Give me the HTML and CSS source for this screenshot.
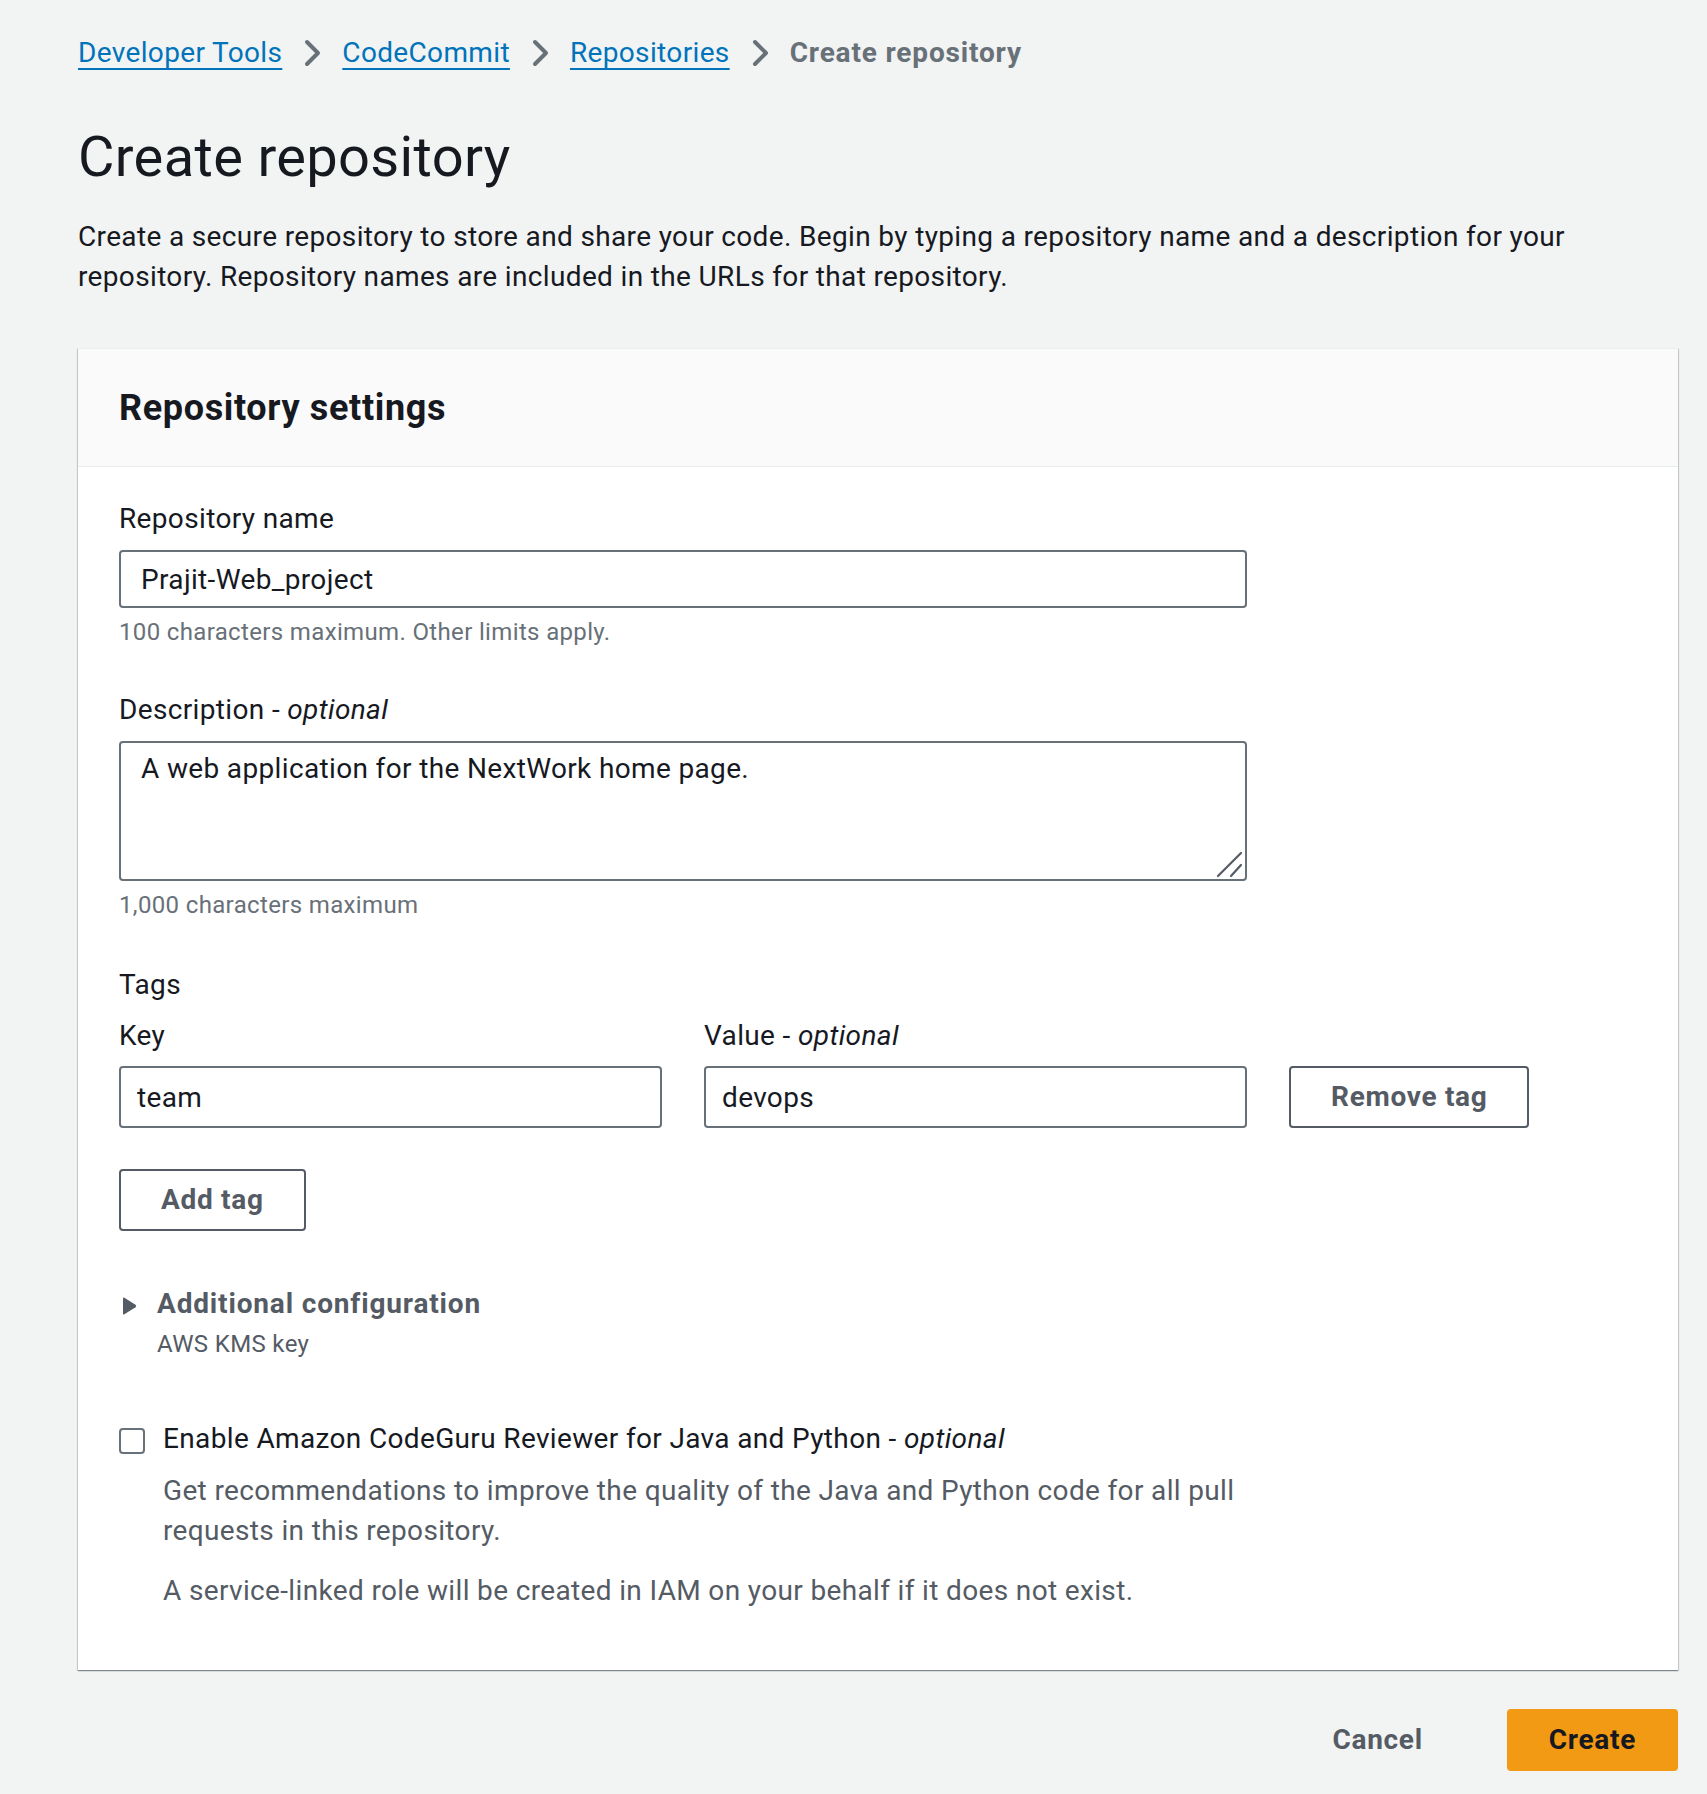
FILE: index.html
```html
<!DOCTYPE html>
<html lang="en">
<head>
<meta charset="utf-8">
<title>Create repository</title>
<link rel="stylesheet" href="styles.css">
</head>
<body>
<div class="page">
  <nav class="breadcrumbs">
    <a class="crumb-link" href="#">Developer Tools</a>
    <svg class="chev" viewBox="0 0 16 16" width="32" height="32"><path d="M5.5 2.5l5.5 5.5-5.5 5.5" /></svg>
    <a class="crumb-link" href="#">CodeCommit</a>
    <svg class="chev" viewBox="0 0 16 16" width="32" height="32"><path d="M5.5 2.5l5.5 5.5-5.5 5.5" /></svg>
    <a class="crumb-link" href="#">Repositories</a>
    <svg class="chev" viewBox="0 0 16 16" width="32" height="32"><path d="M5.5 2.5l5.5 5.5-5.5 5.5" /></svg>
    <span class="crumb-current">Create repository</span>
  </nav>

  <h1 class="title">Create repository</h1>
  <p class="intro">Create a secure repository to store and share your code. Begin by typing a repository name and a description for your repository. Repository names are included in the URLs for that repository.</p>

  <section class="card">
    <div class="card-header">
      <h2 class="card-title">Repository settings</h2>
    </div>
    <div class="card-body">
      <div class="field">
        <label class="label">Repository name</label>
        <input class="input" type="text" value="Prajit-Web_project">
        <div class="hint">100 characters maximum. Other limits apply.</div>
      </div>

      <div class="field field-gap">
        <label class="label">Description - <i>optional</i></label>
        <div class="ta-wrap">
          <textarea class="textarea">A web application for the NextWork home page.</textarea>
          <svg class="grip" viewBox="0 0 28 28" width="28" height="28"><path d="M3 26L26 3M16 26L26 15" /></svg>
        </div>
        <div class="hint">1,000 characters maximum</div>
      </div>

      <div class="field tags-field">
        <div class="label">Tags</div>
        <div class="tag-row">
          <div class="tag-col">
            <label class="label tag-label">Key</label>
            <input class="input tag-input" type="text" value="team">
          </div>
          <div class="tag-col">
            <label class="label tag-label">Value - <i>optional</i></label>
            <input class="input tag-input" type="text" value="devops">
          </div>
          <div class="tag-action">
            <button class="btn" type="button">Remove tag</button>
          </div>
        </div>
        <button class="btn add-btn" type="button">Add tag</button>
      </div>

      <div class="expander">
        <div class="expander-head">
          <svg class="caret" viewBox="0 0 16 20" width="16" height="20"><path d="M2 2.5 Q2 1 3.4 1.8 L14.5 8.8 Q16 10 14.5 11.2 L3.4 18.2 Q2 19 2 17.5 Z" /></svg>
          <span class="expander-title">Additional configuration</span>
        </div>
        <div class="expander-desc">AWS KMS key</div>
      </div>

      <div class="check-row">
        <span class="checkbox"></span>
        <span class="check-label">Enable Amazon CodeGuru Reviewer for Java and Python - <i>optional</i></span>
      </div>
      <div class="check-desc">
        <p class="check-p">Get recommendations to improve the quality of the Java and Python code for all pull requests in this repository.</p>
        <p class="check-p check-p2">A service-linked role will be created in IAM on your behalf if it does not exist.</p>
      </div>
    </div>
  </section>

  <div class="actions">
    <button class="btn btn-link" type="button">Cancel</button>
    <button class="btn btn-primary" type="button">Create</button>
  </div>
</div>
</body>
</html>
```

FILE: styles.css
```css
html, body {
  margin: 0;
  padding: 0;
}
body {
  background: #f2f3f3;
  font-family: Roboto, "Liberation Sans", sans-serif;
  color: #16191f;
  font-size: 28px;
  line-height: 40px;
  letter-spacing: 0.0125em;
  min-height: 1794px;
}
.page {
  width: 1600px;
  margin-left: 78px;
  padding-top: 33px;
}
.breadcrumbs {
  display: flex;
  align-items: center;
  height: 40px;
}
.crumb-link {
  color: #0073bb;
  text-decoration: underline;
  text-decoration-thickness: 2px;
  text-underline-offset: 6px;
}
.chev {
  margin: 0 14px;
  fill: none;
  stroke: #687078;
  stroke-width: 2;
  stroke-linecap: round;
  stroke-linejoin: round;
}
.crumb-current {
  color: #687078;
  font-weight: 700;
  letter-spacing: 0.03em;
}
.title {
  margin: 48px 0 0;
  font-size: 56px;
  line-height: 72px;
  font-weight: 400;
  color: #16191f;
}
.intro {
  margin: 24px 0 0;
  max-width: 1540px;
}
.card {
  margin-top: 51px;
  background: #fff;
  box-shadow: 0 1px 1px 0 rgba(0, 28, 36, 0.3), 1px 1px 1px 0 rgba(0, 28, 36, 0.15), -1px 1px 1px 0 rgba(0, 28, 36, 0.15);
  border-top: 1px solid #eaeded;
}
.card-header {
  background: #fafafa;
  padding: 35px 41px 34px;
  border-bottom: 1px solid #eaeded;
}
.card-title {
  margin: 0;
  font-size: 36px;
  line-height: 48px;
  font-weight: 700;
  letter-spacing: 0.018em;
}
.card-body {
  padding: 32px 41px 59px;
}
.field {
  display: flex;
  flex-direction: column;
  align-items: flex-start;
}
.field-gap {
  margin-top: 42px;
}
.tags-field {
  margin-top: 44px;
}
.label {
  display: block;
  margin-bottom: 11px;
}
.label i, .check-label i {
  font-style: italic;
}
.input, .textarea {
  box-sizing: border-box;
  width: 1128px;
  font-family: inherit;
  font-size: 28px;
  line-height: 40px;
  letter-spacing: 0.0125em;
  color: #16191f;
  background: #fff;
  border: 2px solid #687078;
  border-radius: 4px;
  outline: none;
  margin: 0;
}
.input {
  height: 58px;
  padding: 7px 20px;
}
.ta-wrap {
  position: relative;
  width: 1128px;
}
.textarea {
  height: 140px;
  padding: 6px 20px;
  resize: none;
  display: block;
}
.grip {
  position: absolute;
  right: 4px;
  bottom: 3px;
  fill: none;
  stroke: #545b64;
  stroke-width: 2.2;
  stroke-linecap: round;
}
.hint {
  margin-top: 8px;
  font-size: 24px;
  line-height: 32px;
  color: #687078;
}
.tag-row {
  display: grid;
  grid-template-columns: 543px 543px auto;
  column-gap: 42px;
  margin-top: 0;
}
.tag-col {
  display: flex;
  flex-direction: column;
}
.tag-label {
  margin-bottom: 10px;
}
.tag-input {
  width: 543px;
  height: 62px;
  padding: 9px 16px;
}
.tag-action {
  display: flex;
  align-items: flex-end;
}
.btn {
  box-sizing: border-box;
  font-family: inherit;
  font-size: 28px;
  line-height: 40px;
  font-weight: 700;
  letter-spacing: 0.025em;
  color: #545b64;
  background: #fff;
  border: 2px solid #545b64;
  border-radius: 4px;
  padding: 9px 40px;
  margin: 0;
  cursor: pointer;
}
.add-btn {
  margin-top: 41px;
}
.expander {
  margin-top: 53px;
}
.expander-head {
  display: flex;
  align-items: center;
}
.caret {
  fill: #545b64;
  margin-left: 2px;
  margin-right: 20px;
  margin-top: 4px;
}
.expander-title {
  font-weight: 700;
  color: #545b64;
  letter-spacing: 0.03em;
}
.expander-desc {
  margin-top: 4px;
  padding-left: 38px;
  font-size: 24px;
  line-height: 32px;
  color: #545b64;
}
.check-row {
  display: flex;
  align-items: flex-start;
  margin-top: 59px;
}
.checkbox {
  box-sizing: border-box;
  width: 26px;
  height: 26px;
  margin-top: 9px;
  margin-right: 18px;
  border: 2px solid #687078;
  border-radius: 4px;
  background: #fff;
  flex: none;
}
.check-desc {
  padding-left: 44px;
  max-width: 1128px;
}
.check-p {
  margin: 12px 0 0;
  color: #545b64;
}
.check-p2 {
  margin-top: 20px;
}
.actions {
  display: flex;
  justify-content: flex-end;
  align-items: center;
  margin-top: 39px;
  gap: 42px;
}
.btn-link {
  background: transparent;
  border-color: transparent;
}
.btn-primary {
  background: #f29a13;
  border-color: #f29a13;
  color: #16191f;
}
```
